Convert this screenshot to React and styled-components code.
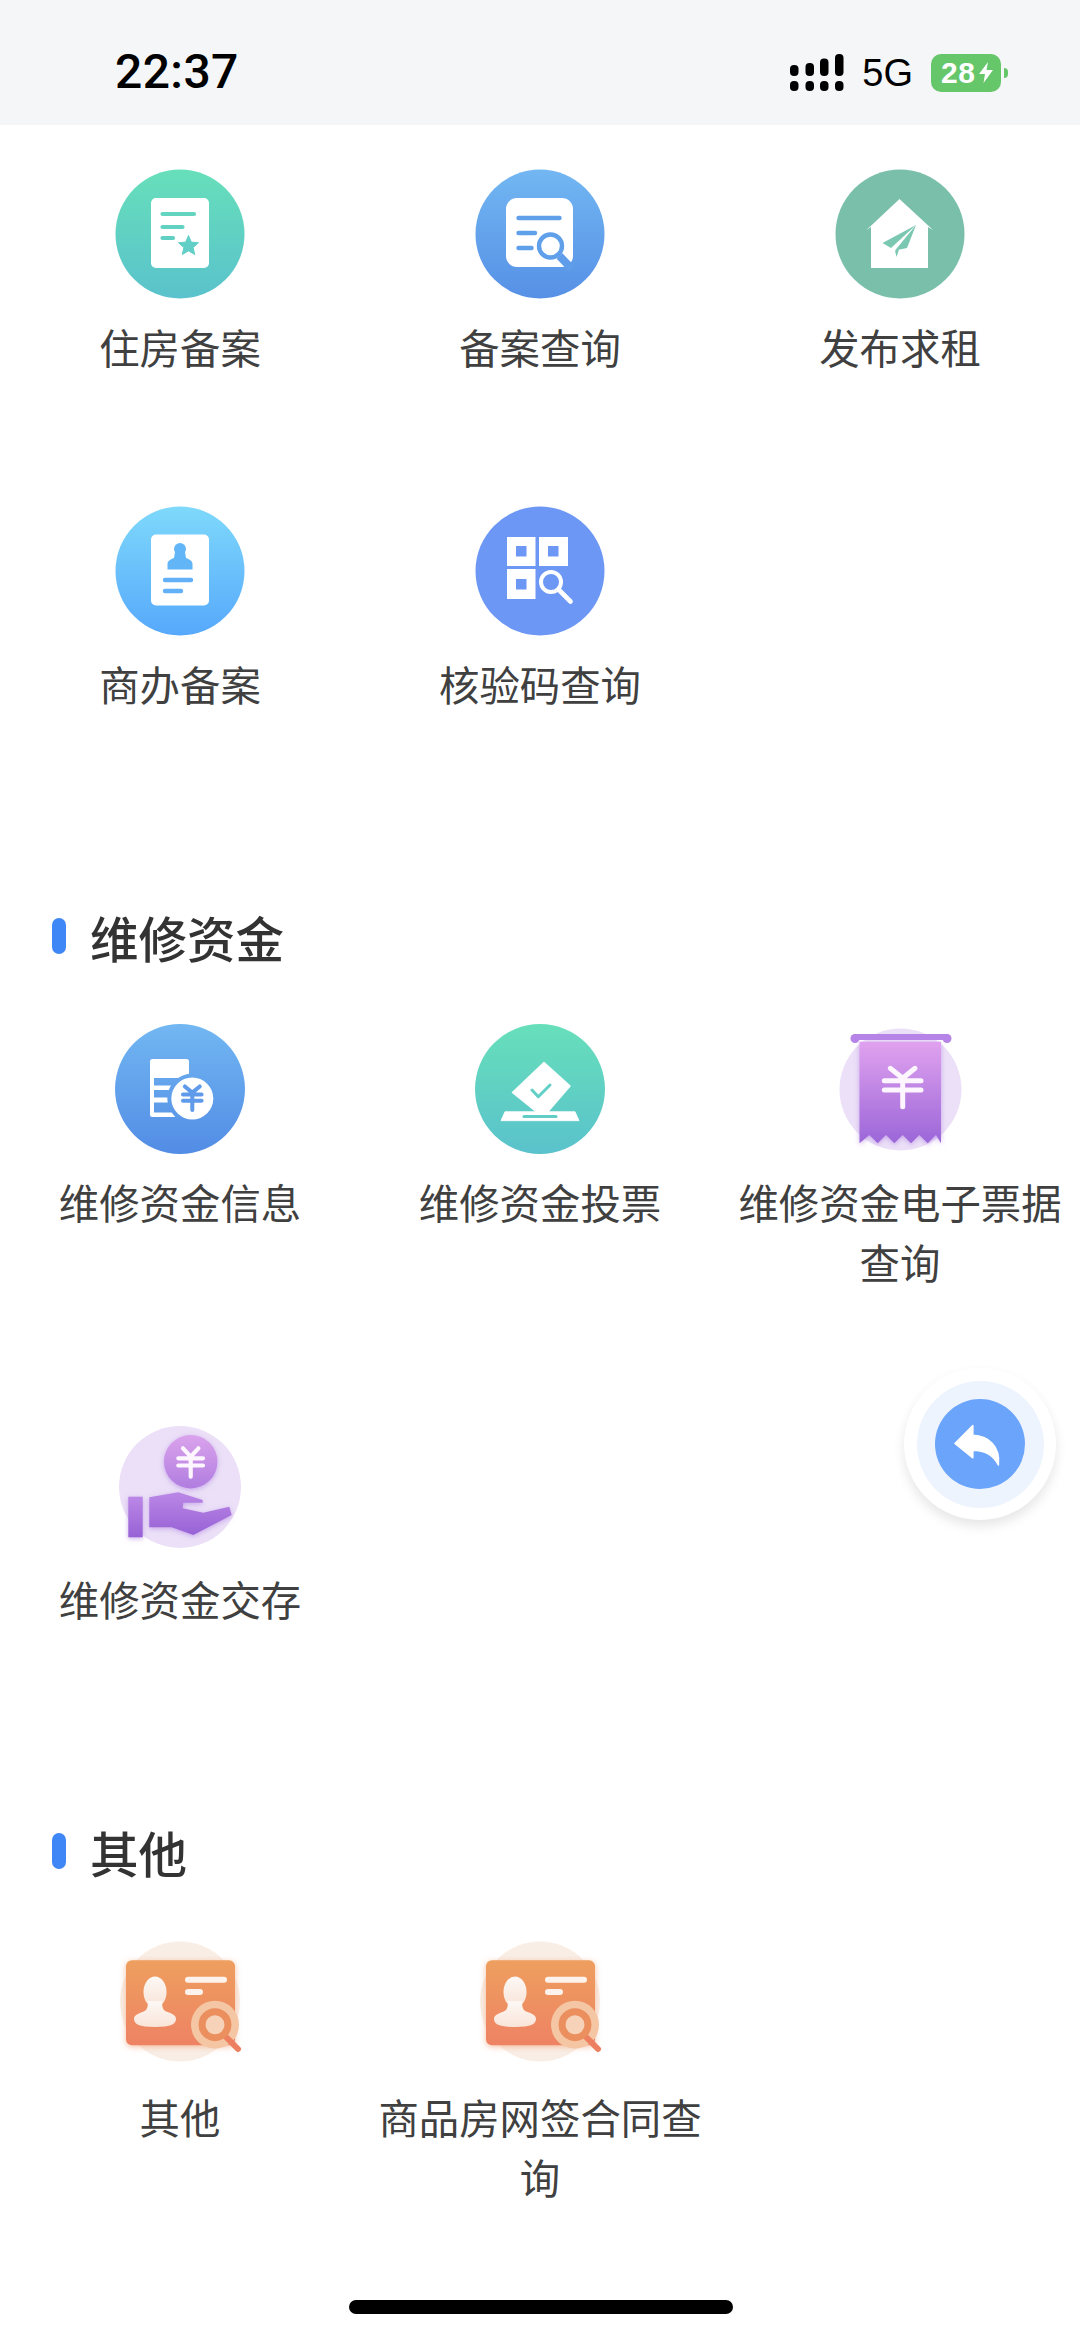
import React from "react";
import styled, { createGlobalStyle } from "styled-components";

const Global = createGlobalStyle`
  html, body { margin: 0; padding: 0; background: #fff; }
  body { font-family: "Noto Sans CJK SC", "Noto Sans", sans-serif; }
`;

const Page = styled.div`
  position: relative;
  width: 1080px;
  height: 2337px;
  overflow: hidden;
  background: #fff;
`;

const StatusBar = styled.header`
  height: 125px;
  box-sizing: border-box;
  padding: 18px 73px 0 115px;
  background: #f5f6f8;
  display: flex;
  align-items: center;
  justify-content: space-between;
  font-family: "Liberation Sans", Arial, sans-serif;
  color: #000;
`;

const Clock = styled.span`
  font-family: Roboto, "Liberation Sans", sans-serif;
  font-size: 48px;
  font-weight: 500;
  letter-spacing: 0.4px;
  line-height: 1;
`;

const StatusRight = styled.div`
  display: flex;
  align-items: center;
  gap: 18px;
  margin-top: 2px;
`;

const Network = styled.span`
  font-size: 38px;
  line-height: 1;
`;

const Battery = styled.div`
  position: relative;
  width: 70px;
  height: 38px;
  margin-right: 6px;
  border-radius: 10px;
  background: #66c66a;
  color: #fff;
  display: flex;
  align-items: center;
  padding-left: 10px;
  gap: 3px;
  box-sizing: border-box;
  font-size: 30px;
  font-weight: 700;
  letter-spacing: 0.6px;

  &::after {
    content: "";
    position: absolute;
    right: -7px;
    top: 14px;
    width: 4px;
    height: 10px;
    border-radius: 0 5px 5px 0;
    background: #66c66a;
  }
`;

const Main = styled.main`
  padding-top: 44px;
`;

const Section = styled.section`
  & + & {
    margin-top: 189px;
  }
`;

const Heading = styled.h2`
  margin: 0 0 53px;
  height: 68px;
  padding-left: 52px;
  display: flex;
  align-items: center;
  gap: 24px;
  font-size: 48.5px;
  font-weight: 500;
  color: #333;
`;

const HeadingMark = styled.i`
  width: 14px;
  height: 36px;
  margin-top: -2px;
  border-radius: 7px;
  background: #3f86f6;
`;

const Grid = styled.div`
  display: grid;
  grid-template-columns: repeat(3, 360px);
  row-gap: 129px;
`;

const Item = styled.div`
  display: flex;
  flex-direction: column;
  align-items: center;
  padding: 0 15px;
`;

const IconBox = styled.div`
  width: 130px;
  height: 130px;
  margin-bottom: 18px;
`;

const Label = styled.div`
  font-size: 40.4px;
  line-height: 60px;
  color: #404040;
  text-align: center;
`;

const BackButton = styled.div`
  position: absolute;
  left: 904px;
  top: 1368px;
  width: 152px;
  height: 152px;
  border-radius: 50%;
  background: #fff;
  box-shadow: 0 6px 12px rgba(0, 0, 0, 0.1);
  display: flex;
  align-items: center;
  justify-content: center;
`;

const BackHalo = styled.div`
  width: 127px;
  height: 127px;
  border-radius: 50%;
  background: #eef4fe;
  display: flex;
  align-items: center;
  justify-content: center;
`;

const BackCore = styled.div`
  width: 90px;
  height: 90px;
  border-radius: 50%;
  background: #6ba4fb;
`;

const HomeBar = styled.div`
  position: absolute;
  left: 349px;
  top: 2300px;
  width: 384px;
  height: 14px;
  border-radius: 7px;
  background: #000;
`;

const Svg = ({ children }) => (
  <svg width="130" height="130" viewBox="0 0 130 130" style={{ overflow: "visible", display: "block" }}>
    {children}
  </svg>
);

const Grad = ({ id, a, b }) => (
  <linearGradient id={id} gradientUnits="userSpaceOnUse" x1="65" y1="0" x2="65" y2="130">
    <stop offset="0" stopColor={a} />
    <stop offset="1" stopColor={b} />
  </linearGradient>
);

const Glow = ({ id, color, blur = 2.2, opacity = 0.55 }) => (
  <filter id={id} x="-20%" y="-20%" width="140%" height="140%">
    <feDropShadow dx="0" dy="1.5" stdDeviation={blur} floodColor={color} floodOpacity={opacity} />
  </filter>
);

const Yen = ({ x, y, s = 1, color = "#fff", w = 5 }) => (
  <g transform={`translate(${x} ${y}) scale(${s})`} fill="none" stroke={color} strokeWidth={w} strokeLinecap="round" strokeLinejoin="round">
    <path d="M-12 -17L0 -7L12 -17M0 -7V21M-15 -4H15M-15 6H15" />
  </g>
);

const Star = ({ cx, cy, r, fill }) => {
  const pts = [];
  for (let i = 0; i < 10; i++) {
    const rad = i % 2 ? r * 0.46 : r;
    const ang = (-90 + i * 36) * (Math.PI / 180);
    pts.push(`${(cx + rad * Math.cos(ang)).toFixed(1)},${(cy + rad * Math.sin(ang)).toFixed(1)}`);
  }
  return <polygon points={pts.join(" ")} fill={fill} strokeLinejoin="round" stroke={fill} strokeWidth="1" />;
};

const HousingIcon = () => (
  <Svg>
    <defs><Grad id="g1" a="#67dfba" b="#5ac2cc" /></defs>
    <circle cx="65" cy="65" r="64.5" fill="url(#g1)" />
    <rect x="36" y="29" width="58" height="70" rx="5" fill="#fff" />
    <g stroke="url(#g1)" strokeWidth="4.2" strokeLinecap="round">
      <path d="M47.5 45H79" />
      <path d="M47.5 58H67.5" />
      <path d="M47.5 69H58" />
    </g>
    <Star cx={73.5} cy={77} r={10.5} fill="#62cfc6" />
  </Svg>
);

const RecordQueryIcon = () => (
  <Svg>
    <defs><Grad id="g2" a="#72b7f2" b="#5690e6" /></defs>
    <circle cx="65" cy="65" r="64.5" fill="url(#g2)" />
    <rect x="31" y="29" width="67" height="69" rx="11" fill="#fff" />
    <g stroke="#609fea" strokeWidth="4.4" strokeLinecap="round" fill="none">
      <path d="M43.5 49H84.5" />
      <path d="M43.5 64H60" />
      <path d="M43.5 79H56.5" />
      <circle cx="75.5" cy="77" r="11.5" />
    </g>
    <path d="M84.5 87L97 100" stroke="#5f9ce9" strokeWidth="8" />
  </Svg>
);

const RentIcon = () => (
  <Svg>
    <circle cx="65" cy="65" r="64.5" fill="#7abfaa" />
    <path d="M64.5 30L98 61L93 58V99H36V58L31.5 61Z" fill="#fff" strokeLinejoin="round" />
    <path d="M81 56L47.5 74L56 79Z" fill="#7ac8b2" />
    <path d="M81 56L60 81.5L72 79Z" fill="#7ac8b2" />
    <path d="M60 81.5L61.5 88L64 80.5Z" fill="#7ac8b2" />
  </Svg>
);

const OfficeIcon = () => (
  <Svg>
    <defs><Grad id="g4" a="#7ed9fb" b="#56a8fb" /></defs>
    <circle cx="65" cy="65" r="64.5" fill="url(#g4)" />
    <rect x="36" y="28.5" width="58" height="71" rx="5" fill="#fff" />
    <g fill="#62b6f8">
      <circle cx="65" cy="43" r="6" />
      <path d="M60 46H70L71 52C75 53.5 77.5 55 77.5 58V63.5H52.5V58C52.5 55 55 53.5 59 52Z" />
    </g>
    <g stroke="#61b0f8" strokeWidth="4.4" strokeLinecap="round">
      <path d="M50 74H76" />
      <path d="M50 85H66" />
    </g>
  </Svg>
);

const CodeIcon = () => (
  <Svg>
    <circle cx="65" cy="65" r="64.5" fill="#6c97f5" />
    <g fill="#fff">
      <rect x="32" y="31" width="28.5" height="29" />
      <rect x="64" y="31" width="29" height="29" />
      <rect x="32" y="63" width="28.5" height="30" />
    </g>
    <g fill="#6c97f5">
      <rect x="41" y="40" width="10.5" height="10.5" />
      <rect x="73" y="40" width="10.5" height="10.5" />
      <rect x="41" y="73" width="10.5" height="10.5" />
    </g>
    <circle cx="76" cy="76" r="10" fill="none" stroke="#fff" strokeWidth="4" />
    <path d="M83.5 83.5L95.5 95.5" stroke="#fff" strokeWidth="4.6" strokeLinecap="round" />
  </Svg>
);

const FundInfoIcon = () => (
  <Svg>
    <defs><Grad id="g5" a="#72b7f2" b="#528ce5" /></defs>
    <circle cx="65" cy="65" r="65" fill="url(#g5)" />
    <rect x="35" y="35" width="39" height="58" rx="2.5" fill="#fff" />
    <g fill="url(#g5)">
      <rect x="39" y="54" width="40" height="7.5" />
      <rect x="39" y="66" width="40" height="7.5" />
      <rect x="39" y="78.5" width="40" height="10" />
    </g>
    <circle cx="77.3" cy="74.5" r="25" fill="url(#g5)" />
    <circle cx="77.3" cy="74.5" r="21" fill="#fff" />
    <Yen x={77.3} y={73} s={0.62} color="#5f9bea" w={6.5} />
  </Svg>
);

const FundVoteIcon = () => (
  <Svg>
    <defs><Grad id="g6" a="#67dfba" b="#5ac2cc" /></defs>
    <circle cx="65" cy="65" r="65" fill="url(#g6)" />
    <path d="M69 38.5L95 62L73 87.5H61L37.5 68.5Z" fill="#fff" stroke="#fff" strokeWidth="1.5" strokeLinejoin="round" />
    <path d="M57 66L63.3 72.7L75 61" fill="none" stroke="#62d0c6" strokeWidth="3" strokeLinecap="round" strokeLinejoin="round" />
    <path d="M30 87.7H100L104 96.7H26Z" fill="#fff" stroke="#fff" strokeWidth="0.8" strokeLinejoin="round" />
    <path d="M49 92.5H81" stroke="#60cdc7" strokeWidth="3" strokeLinecap="round" />
  </Svg>
);

const ReceiptIcon = () => (
  <Svg>
    <defs>
      <linearGradient id="g7" x1="0" y1="0" x2="0" y2="1">
        <stop offset="0" stopColor="#e0a2ef" />
        <stop offset="1" stopColor="#9b66d8" />
      </linearGradient>
      <Glow id="f7" color="#a874e0" blur={2.6} />
    </defs>
    <circle cx="65.5" cy="65.5" r="61" fill="#ebe0f7" />
    <g filter="url(#f7)">
      <path d="M24.5 17.7H106V119.3L101 111L92.7 119.3L84.3 111L76 119.3L67.7 111L59.3 119.3L51 111L42.7 119.3L34.3 111L24.5 119.3Z" fill="url(#g7)" />
    </g>
    <rect x="17.5" y="10" width="97" height="6" rx="3" fill="#b584e6" />
    <circle cx="20" cy="14.5" r="4.5" fill="#b584e6" />
    <circle cx="112" cy="14.5" r="4.5" fill="#b584e6" />
    <g fill="none" stroke="#fdf6fe" strokeWidth="5" strokeLinecap="round" strokeLinejoin="round">
      <path d="M55.3 44.3L67.7 54.3L80 44.3M67.7 54.3V82.7M49.3 56.7H86M49.3 66H86" />
    </g>
  </Svg>
);

const DepositIcon = () => (
  <Svg>
    <defs>
      <linearGradient id="g8a" x1="0" y1="0" x2="0" y2="1">
        <stop offset="0" stopColor="#dba3ec" />
        <stop offset="1" stopColor="#b07de0" />
      </linearGradient>
      <linearGradient id="g8b" x1="0" y1="0" x2="0" y2="1">
        <stop offset="0" stopColor="#bb87e6" />
        <stop offset="1" stopColor="#9762d5" />
      </linearGradient>
      <Glow id="f8" color="#a874e0" blur={2.6} />
    </defs>
    <circle cx="65" cy="66" r="61" fill="#ebe0f7" />
    <circle cx="75.7" cy="40.7" r="26.7" fill="url(#g8a)" filter="url(#f8)" />
    <path d="M68 27.3L75.7 35.7L83.4 27.3M75.7 35.7V55.7M63.3 37.3H88M63.3 44.5H88" fill="none" stroke="#fdf6fe" strokeWidth="4.2" strokeLinecap="round" strokeLinejoin="round" />
    <g filter="url(#f8)">
      <rect x="13.3" y="75.7" width="14.4" height="40.6" fill="url(#g8b)" />
      <path d="M34.3 76.3L63.3 71.3L87.7 79V81.7H68.3L67.7 87.3L88.3 91.7L114.3 85.7L116.7 94L78.3 114L56.7 106.3H34.3Z" fill="url(#g8b)" />
    </g>
  </Svg>
);

const IdCardIcon = ({ id }) => (
  <Svg>
    <defs>
      <linearGradient id={`g9${id}`} x1="0" y1="0" x2="0" y2="1">
        <stop offset="0" stopColor="#ee9f5f" />
        <stop offset="1" stopColor="#ee8264" />
      </linearGradient>
      <linearGradient id={`p9${id}`} x1="0" y1="0" x2="0" y2="1">
        <stop offset="0" stopColor="#fdf8f5" />
        <stop offset="1" stopColor="#f9e4d8" />
      </linearGradient>
      <Glow id={`f9${id}`} color="#f1a67c" blur={3.2} opacity={0.7} />
    </defs>
    <circle cx="65" cy="62.5" r="60" fill="#f9eee6" />
    <rect x="11" y="21.3" width="109" height="85" rx="6" fill={`url(#g9${id})`} filter={`url(#f9${id})`} />
    <ellipse cx="40" cy="53" rx="11.5" ry="15.5" fill={`url(#p9${id})`} />
    <path d="M33 62H47C47 72 50 72 54 73.5C59 75.5 61 77 61 80C61 85 56 88 40 88C24 88 19 85 19 80C19 77 21 75.5 26 73.5C30 72 33 72 33 62Z" fill={`url(#p9${id})`} />
    <path d="M73 40.7H109M73 53H85" stroke="#fdf3ec" strokeWidth="6" strokeLinecap="round" />
    <circle cx="100" cy="85.7" r="24" fill="#f4c6a4" />
    <path d="M108 95L123 110" stroke="#ec7f60" strokeWidth="6" strokeLinecap="round" />
    <circle cx="100" cy="85.7" r="13" fill="#f6d3b8" stroke="#ec8f5f" strokeWidth="7" />
  </Svg>
);

const SignalIcon = () => (
  <svg width="54" height="38" viewBox="0 0 54 38" style={{ display: "block" }} fill="#000">
    <rect x="0" y="11" width="8.5" height="11" rx="4" />
    <rect x="15.5" y="9" width="8.5" height="13" rx="4" />
    <rect x="30" y="4.5" width="8.5" height="17.5" rx="4" />
    <rect x="45" y="0" width="8.5" height="22" rx="4" />
    <rect x="0" y="27" width="8.5" height="10" rx="4" />
    <rect x="15.5" y="27" width="8.5" height="10" rx="4" />
    <rect x="30" y="27" width="8.5" height="10" rx="4" />
    <rect x="45" y="27" width="8.5" height="10" rx="4" />
  </svg>
);

const BoltIcon = () => (
  <svg width="14" height="21" viewBox="0 0 14 21" style={{ display: "block", flex: "none" }}>
    <path d="M9 0L0 12H6L4.5 21L14 8H7.5Z" fill="#fff" />
  </svg>
);

const ReplyIcon = () => (
  <svg width="90" height="90" viewBox="0 0 88 88" style={{ display: "block" }}>
    <path d="M19.5 43.5L37 26V35.5C52 36 64 46 62 64.5C57 54.5 48 50 37 50V57.5Z" fill="#fff" stroke="#fff" strokeWidth="1.5" strokeLinejoin="round" />
  </svg>
);

const sections = [
  {
    items: [
      ["住房备案", <HousingIcon />],
      ["备案查询", <RecordQueryIcon />],
      ["发布求租", <RentIcon />],
      ["商办备案", <OfficeIcon />],
      ["核验码查询", <CodeIcon />],
    ],
  },
  {
    title: "维修资金",
    items: [
      ["维修资金信息", <FundInfoIcon />],
      ["维修资金投票", <FundVoteIcon />],
      ["维修资金电子票据查询", <ReceiptIcon />],
      ["维修资金交存", <DepositIcon />],
    ],
  },
  {
    title: "其他",
    items: [
      ["其他", <IdCardIcon id="a" />],
      ["商品房网签合同查询", <IdCardIcon id="b" />],
    ],
  },
];

export default function App() {
  return (
    <Page>
      <Global />
      <StatusBar>
        <Clock>22:37</Clock>
        <StatusRight>
          <SignalIcon />
          <Network>5G</Network>
          <Battery>
            28
            <BoltIcon />
          </Battery>
        </StatusRight>
      </StatusBar>
      <Main>
        {sections.map((section, i) => (
          <Section key={i}>
            {section.title && (
              <Heading>
                <HeadingMark />
                {section.title}
              </Heading>
            )}
            <Grid>
              {section.items.map(([label, icon]) => (
                <Item key={label}>
                  <IconBox>{icon}</IconBox>
                  <Label>{label}</Label>
                </Item>
              ))}
            </Grid>
          </Section>
        ))}
      </Main>
      <BackButton>
        <BackHalo>
          <BackCore>
            <ReplyIcon />
          </BackCore>
        </BackHalo>
      </BackButton>
      <HomeBar />
    </Page>
  );
}
